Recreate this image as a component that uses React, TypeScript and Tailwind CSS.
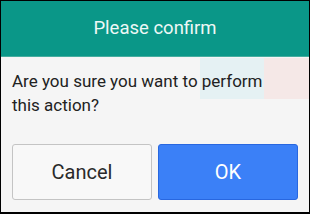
import React from "react";

export default function App() {
  return (
    <div
      className="relative w-[310px] h-[214px] bg-[#f5f5f5] border-l border-t border-r border-b-2 border-black flex flex-col overflow-hidden"
      style={{ fontFamily: "Roboto, 'Noto Sans', sans-serif" }}
    >
      {/* faint tinted overlays in the body */}
      <div className="absolute left-[199px] top-[57px] w-[64px] h-[41px] bg-[#e5f1f3]" />
      <div className="absolute left-[263px] top-[57px] w-[46px] h-[41px] bg-[#f5e8e7]" />

      <div className="h-[56px] shrink-0 bg-[#0a9788] border-b border-[#45ad9f] flex items-center justify-center">
        <span className="text-[18.5px] text-[#eef8f6] leading-none">Please confirm</span>
      </div>

      <div className="relative flex-1 flex flex-col pl-[11px] pt-[12px]">
        <p className="max-w-[270px] text-[17px] leading-[24px] text-[#222]">
          Are you sure you want to perform this action?
        </p>

        <div className="mt-[27px] flex gap-[6px]">
          <button className="w-[140px] shrink-0 h-[56px] rounded-[3px] border border-[#c4c4c4] bg-[#f8f8f8] text-[20px] text-[#2a2a2a]">
            Cancel
          </button>
          <button className="w-[140px] shrink-0 h-[56px] rounded-[3px] border border-[#2867e0] bg-[#3b80f7] text-[20px] text-white">
            OK
          </button>
        </div>
      </div>
    </div>
  );
}
